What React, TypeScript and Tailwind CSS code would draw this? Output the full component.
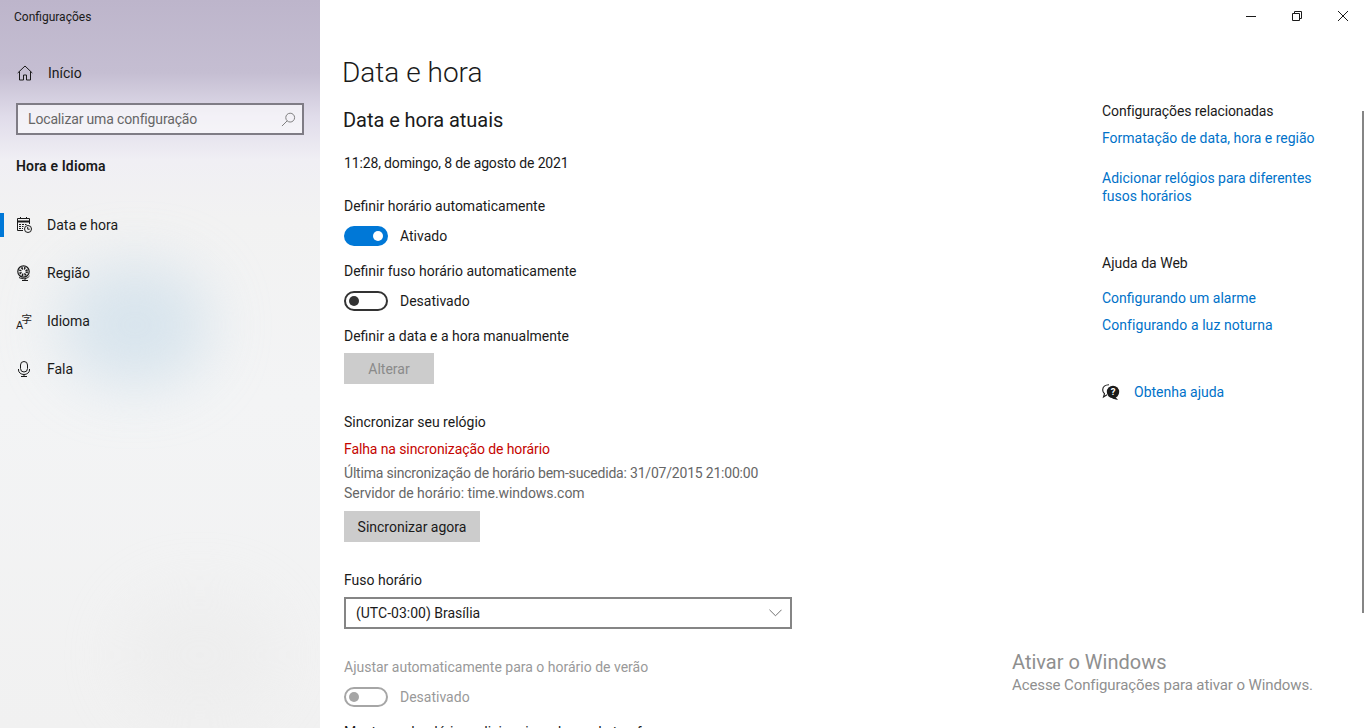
import React from "react";

const font = { fontFamily: 'Roboto, "Noto Sans", sans-serif' };

function Toggle({ on, disabled, label }: { on?: boolean; disabled?: boolean; label: string }) {
  return (
    <div className="flex items-center h-[20px]">
      <div
        className={
          on
            ? "w-[44px] h-[20px] rounded-full bg-[#0078d7] flex items-center justify-end pr-[5px]"
            : disabled
            ? "w-[44px] h-[20px] rounded-full border-2 border-[#a6a6a6] flex items-center pl-[3px]"
            : "w-[44px] h-[20px] rounded-full border-2 border-[#333333] flex items-center pl-[3px]"
        }
      >
        <div className={on ? "w-[10px] h-[10px] rounded-full bg-white" : disabled ? "w-[10px] h-[10px] rounded-full bg-[#a6a6a6]" : "w-[10px] h-[10px] rounded-full bg-[#333333]"} />
      </div>
      <span className={disabled ? "ml-[12px] text-[#999999]" : "ml-[12px] text-[#1a1a1a]"}>{label}</span>
    </div>
  );
}

function NavItem({ icon, label, active }: { icon: React.ReactNode; label: string; active?: boolean }) {
  return (
    <div className="relative h-[48px] flex items-center pl-[16px]">
      {active && <div className="absolute left-0 top-[12px] w-[4px] h-[24px] bg-[#0078d7]" />}
      <div className="w-[16px] h-[16px] text-[#1a1a1a]">{icon}</div>
      <span className="ml-[15px] text-[#1a1a1a]">{label}</span>
    </div>
  );
}

const CalIcon = (
  <svg viewBox="0 0 16 16" width="16" height="16" fill="none" stroke="currentColor" strokeWidth="1">
    <path d="M7 13.500H1.500V1.500H13.500V7" />
    <path d="M1.500 4.500H13.500" strokeWidth="2" />
    <path d="M4.500 0v2M10.500 0v2" />
    <path d="M3 7.500h2M6 7.500h2M9 7.500h1.500M3 9.500h2M6 9.500h1.500M3 11.500h2M6 11.500h1" />
    <circle cx="12" cy="12" r="3.500" fill="#f1f1f1" />
    <path d="M11.700 10v2.200h2" />
  </svg>
);
const GlobeIcon = (
  <svg viewBox="0 0 16 16" width="16" height="16" fill="none" stroke="currentColor" strokeWidth="1">
    <circle cx="7.500" cy="6.500" r="5.700" strokeWidth="1.200" />
    <circle cx="7.500" cy="6.500" r="3.300" strokeWidth="2.400" strokeDasharray="1.500 1.100" />
    <path d="M3 12.500c3.500 2 8 1.500 10.500-1.500" />
    <path d="M9 13.500v2M6 15.500h6" />
  </svg>
);
const LangIcon = (
  <svg viewBox="0 0 16 16" width="16" height="16" fill="currentColor">
    <text x="0" y="15.500" fontSize="11" fontFamily="Roboto, sans-serif">A</text>
    <text x="5.500" y="10" fontSize="10.500" fontFamily='"Noto Sans CJK SC", sans-serif'>字</text>
  </svg>
);
const MicIcon = (
  <svg viewBox="0 0 16 16" width="16" height="16" fill="none" stroke="currentColor" strokeWidth="1">
    <rect x="4.500" y="0.500" width="7" height="10.500" rx="3.500" />
    <path d="M2.500 8v1a5.500 4.500 0 0 0 11 0V8M8 13.500v2M5 15.500h6" />
  </svg>
);

export default function App() {
  return (
    <div className="relative flex w-[1366px] h-[728px] overflow-hidden bg-white text-[14px] leading-[20px] text-[#1a1a1a]" style={font}>
      <aside className="w-[320px] h-full shrink-0 relative overflow-hidden bg-[linear-gradient(180deg,#bdb5cb_0%,#c5bed2_10%,#e0dcea_16%,#f0eff4_22%,#f2f2f2_30%,#f3f4f5_55%,#f1f1f1_100%)]">
        <div className="absolute left-[60px] top-[265px] w-[150px] h-[120px] rounded-full bg-[#c3d9e8] opacity-55 blur-[30px]" />
        <div className="absolute left-[120px] top-[590px] w-[160px] h-[130px] rounded-full bg-[#e6e6e6] opacity-30 blur-[30px]" />
        <div className="relative">
          <div className="h-[33px] flex items-center pl-[14px] text-[12px] text-[#1a1a1a]">Configurações</div>
          <div className="h-[48px] mt-[16px] flex items-center pl-[17px]">
            <svg viewBox="0 0 16 16" width="16" height="16" fill="none" stroke="#1a1a1a" strokeWidth="1">
              <path d="M.7 8 8 1l7.300 7M2.500 6.500v8.500h4v-5h3v5h4V6.500" />
            </svg>
            <span className="ml-[15px]">Início</span>
          </div>
          <div className="mx-[16px] mt-[6px] h-[32px] border-2 border-[#7f7c85] bg-white/60 flex items-center justify-between pl-[10px] pr-[6px] text-[#666666]">
            <span className="tracking-[-0.15px]">Localizar uma configuração</span>
            <svg viewBox="0 0 16 16" width="15" height="15" fill="none" stroke="#777777" strokeWidth="1">
              <circle cx="9.800" cy="6" r="4.700" />
              <path d="M6.500 9.500 1 15" />
            </svg>
          </div>
          <div className="mt-[21px] pl-[16px] h-[20px] font-semibold tracking-[0.15px] text-[#1a1a1a]">Hora e Idioma</div>
          <div className="mt-[25px]">
            <NavItem active icon={CalIcon} label="Data e hora" />
            <NavItem icon={GlobeIcon} label="Região" />
            <NavItem icon={LangIcon} label="Idioma" />
            <NavItem icon={MicIcon} label="Fala" />
          </div>
        </div>
      </aside>

      <main className="flex-1 min-w-0 flex pl-[22px] relative">
        <div className="w-[760px] shrink-0">
          <h1 className="text-[28px] leading-[36px] mt-[55px] font-light text-[#1a1a1a]">Data e hora</h1>
          <h2 className="text-[20px] leading-[26px] mt-[16px] ml-px tracking-[-0.05px] text-[#1a1a1a]">Data e hora atuais</h2>
          <div className="ml-[2px]">
            <p className="mt-[20px] tracking-[-0.14px]">11:28, domingo, 8 de agosto de 2021</p>
            <p className="mt-[23px]">Definir horário automaticamente</p>
            <div className="mt-[10px]"><Toggle on label="Ativado" /></div>
            <p className="mt-[15px]">Definir fuso horário automaticamente</p>
            <div className="mt-[10px]"><Toggle label="Desativado" /></div>
            <p className="mt-[15px]">Definir a data e a hora manualmente</p>
            <div className="mt-[7px] w-[90px] h-[31px] bg-[#cccccc] text-[#8a8a8a] flex items-center justify-center">Alterar</div>
            <p className="mt-[28px]">Sincronizar seu relógio</p>
            <p className="mt-[7px] tracking-[-0.1px] text-[#c50500]">Falha na sincronização de horário</p>
            <p className="mt-[4px] tracking-[-0.2px] text-[#666666]">Última sincronização de horário bem-sucedida: 31/07/2015 21:00:00</p>
            <p className="tracking-[-0.05px] text-[#666666]">Servidor de horário: time.windows.com</p>
            <div className="mt-[8px] w-[136px] h-[31px] bg-[#cccccc] flex items-center justify-center">Sincronizar agora</div>
            <p className="mt-[28px]">Fuso horário</p>
            <div className="mt-[7px] w-[448px] h-[32px] border-2 border-[#858585] flex items-center justify-between pl-[10px] pr-[8px]">
              <span>(UTC-03:00) Brasília</span>
              <svg viewBox="0 0 14 8" width="13" height="8" fill="none" stroke="#666666" strokeWidth="1"><path d="M.5.5 7 7l6.500-6.500" /></svg>
            </div>
            <p className="mt-[28px] text-[#999999]">Ajustar automaticamente para o horário de verão</p>
            <div className="mt-[10px]"><Toggle disabled label="Desativado" /></div>
            <p className="mt-[15px]">Mostrar calendários adicionais na barra de tarefas</p>
          </div>
        </div>

        <div className="w-[222px] pt-[101px]">
          <p className="tracking-[-0.1px]">Configurações relacionadas</p>
          <p className="mt-[7px] text-[#0072c9]">Formatação de data, hora e região</p>
          <p className="mt-[21px] text-[#0072c9] leading-[18px]">Adicionar relógios para diferentes fusos horários</p>
          <p className="mt-[48px]">Ajuda da Web</p>
          <p className="mt-[15px] text-[#0072c9]">Configurando um alarme</p>
          <p className="mt-[7px] tracking-[0.08px] text-[#0072c9]">Configurando a luz noturna</p>
          <div className="mt-[47px] flex items-center h-[20px]">
            <svg viewBox="0 0 18 16" width="18" height="16">
              <path d="M7 .8C3.200 .8.7 3 .7 6c0 1.500.7 2.800 1.800 3.700L1.500 13l3.500-2.200" fill="none" stroke="#1a1a1a" strokeWidth="1.100" />
              <circle cx="11" cy="8" r="6.200" fill="#1a1a1a" />
              <path d="M13.500 13l2.500 3-6-1.500z" fill="#1a1a1a" />
              <text x="11" y="11.200" fontSize="9.500" fontWeight="700" textAnchor="middle" fill="#fff">?</text>
            </svg>
            <span className="ml-[14px] text-[#0072c9]">Obtenha ajuda</span>
          </div>
        </div>

        <div className="absolute right-[2px] top-[111px] w-[2px] h-[502px] bg-[#858585]" />

        <div className="absolute left-[692px] top-[649px] text-[#8f8f8f]">
          <div className="text-[20px] leading-[26px]">Ativar o Windows</div>
          <div className="text-[15px] tracking-[-0.1px] leading-[20px]">Acesse Configurações para ativar o Windows.</div>
        </div>
      </main>

      <div className="absolute top-0 right-0 flex h-[32px] items-center">
        <div className="w-[46px] flex justify-center"><svg width="10" height="10" viewBox="0 0 10 10" stroke="#1a1a1a" fill="none"><path d="M0 5.500h10" /></svg></div>
        <div className="w-[46px] flex justify-center"><svg width="10" height="10" viewBox="0 0 10 10" stroke="#1a1a1a" fill="none"><path d="M.5 2.500h7v7h-7zM2.500 2.500v-2h7v7h-2" /></svg></div>
        <div className="w-[46px] flex justify-center"><svg width="10" height="10" viewBox="0 0 10 10" stroke="#1a1a1a" fill="none"><path d="M0 0l10 10M10 0 0 10" /></svg></div>
      </div>
    </div>
  );
}
